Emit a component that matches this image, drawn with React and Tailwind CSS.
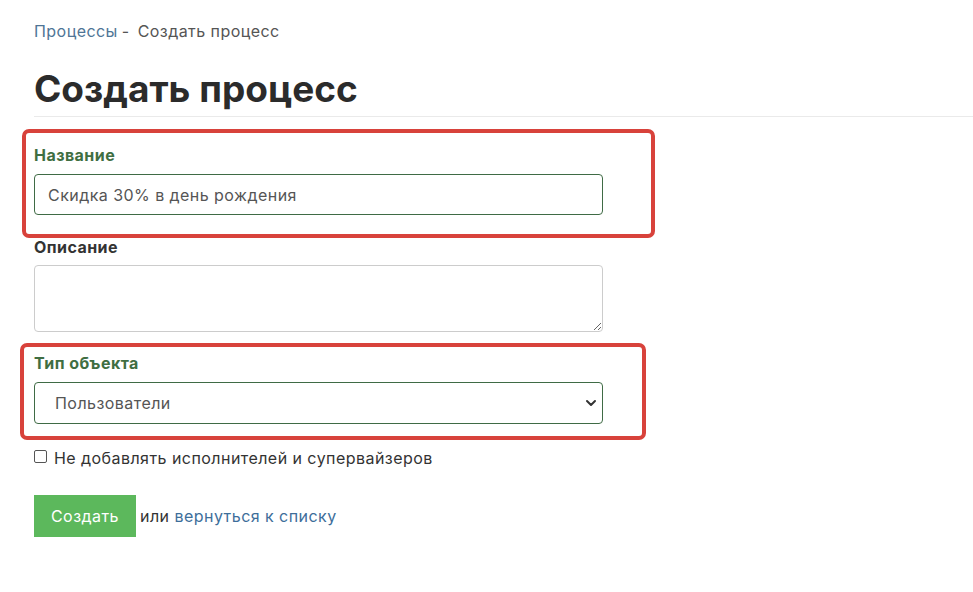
import React from 'react';

const font = { fontFamily: 'Inter, "Noto Sans", sans-serif' };

const App = () => {
  return (
    <div
      className="min-h-[592px] bg-white pl-[34px] pt-[20px] text-[16px] tracking-[0.45px] text-[#333]"
      style={font}
    >
      <div className="flex items-center text-[16px] leading-[22px]">
        <a href="#" className="text-[#4f7596]">Процессы</a>
        <span className="ml-[4px] text-[#555]">-</span>
        <span className="ml-[8px] text-[#555]">Создать процесс</span>
      </div>

      <h1 className="mt-[25px] text-[37px] font-bold leading-[44px] tracking-normal text-[#2b2b2b]">
        Создать процесс
      </h1>
      <div className="mt-[5px] h-px bg-[#eaeaea]" />

      <form className="flex flex-col">
        {/* Название */}
        <div className="-ml-[12px] mt-[12px] w-[633px] rounded-[7px] border-4 border-[#d8423b] pb-[19px] pl-[8px] pt-[11px]">
          <label className="block text-[16px] font-bold leading-[22px] text-[#3f6e42]">Название</label>
          <input
            type="text"
            defaultValue="Скидка 30% в день рождения"
            className="mt-[8px] block h-[41px] w-[569px] rounded-[4px] border border-[#3f6b45] px-[13px] text-[16px] tracking-[0.45px] text-[#555] outline-none"
            style={font}
          />
        </div>

        {/* Описание */}
        <label className="-mt-[2px] block text-[16px] font-bold leading-[22px] text-[#333]">Описание</label>
        <textarea
          className="mt-[7px] block h-[67px] w-[569px] rounded-[4px] border border-[#ccc] px-[12px] py-[6px] text-[16px]"
          style={font}
        />

        {/* Тип объекта */}
        <div className="-ml-[14px] mt-[11px] w-[626px] rounded-[7px] border-4 border-[#d8423b] pb-[12px] pl-[10px] pt-[5px]">
          <label className="block text-[16px] font-bold leading-[22px] text-[#3f6e42]">Тип объекта</label>
          <div className="relative mt-[8px] w-[569px]">
            <select
              className="block h-[42px] w-full appearance-none rounded-[4px] border border-[#3f6b45] bg-white pl-[20px] text-[16px] tracking-[0.45px] text-[#555] outline-none"
              style={font}
              defaultValue="users"
            >
              <option value="users">Пользователи</option>
            </select>
            <svg
              className="pointer-events-none absolute right-[6px] top-[15px] h-[12px] w-[12px] text-[#333]"
              viewBox="0 0 12 12"
              fill="none"
              stroke="currentColor"
              strokeWidth="2"
            >
              <path d="M2 4l4 4 4-4" strokeLinecap="round" strokeLinejoin="round" />
            </svg>
          </div>
        </div>

        <label className="mt-[7px] flex items-center text-[16px] leading-[22px] text-[#333]">
          <span className="mt-[-4px] inline-block h-[13px] w-[13px] rounded-[2px] border border-[#555] bg-white" />
          <span className="ml-[7px]">Не добавлять исполнителей и супервайзеров</span>
        </label>

        <div className="mt-[26px] flex items-center">
          <button
            type="button"
            className="h-[42px] w-[102px] bg-[#5cb85c] text-[16px] tracking-[0.45px] text-white"
            style={font}
          >
            Создать
          </button>
          <span className="ml-[4px] text-[#333]">или</span>
          <a href="#" className="ml-[5px] text-[#3d6e9a]">вернуться к списку</a>
        </div>
      </form>
    </div>
  );
};

export default App;
